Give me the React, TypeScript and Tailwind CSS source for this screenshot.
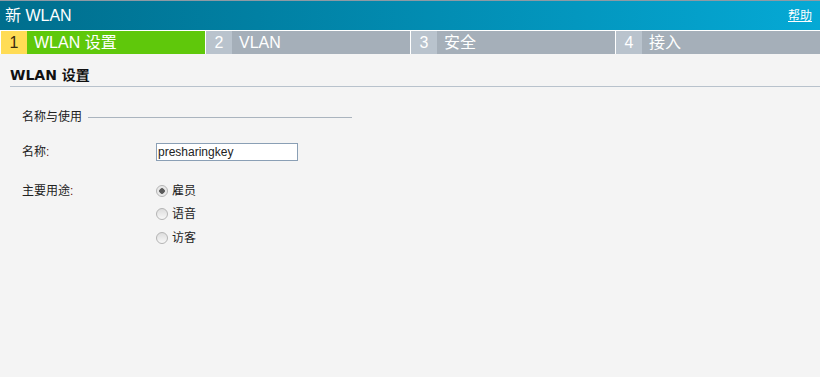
import { useState } from "react";

const steps = [
  { n: "1", label: "WLAN 设置", active: true },
  { n: "2", label: "VLAN", active: false },
  { n: "3", label: "安全", active: false },
  { n: "4", label: "接入", active: false },
];

const uses = ["雇员", "语音", "访客"];

export default function App() {
  const [use, setUse] = useState("雇员");
  const [name, setName] = useState("presharingkey");

  return (
    <div
      className="h-[377px] w-[820px] overflow-hidden bg-[#f4f4f4] text-[12px] text-[#222]"
      style={{ fontFamily: '"Liberation Sans", "Noto Sans CJK SC", sans-serif' }}
    >
      {/* title bar */}
      <div className="h-[1px] bg-[#8e9aa4]" />
      <div className="flex h-[29px] items-center justify-between bg-gradient-to-r from-[#006e8d] to-[#05a9d5] pl-[5px] pr-[8px] text-white">
        <span className="text-[16px]">新 WLAN</span>
        <a href="#" className="text-[12px] underline">帮助</a>
      </div>

      {/* wizard steps */}
      <div className="flex border-t border-white">
        {steps.map((s) => (
          <div key={s.n} className="flex h-[23px] flex-1 border-l border-white text-[16px] text-white">
            <div
              className={
                s.active
                  ? "flex w-[26px] items-center justify-center bg-[#ffdc55] text-[#3a2a10]"
                  : "flex w-[26px] items-center justify-center bg-[#b9c3cd]"
              }
            >
              {s.n}
            </div>
            <div
              className={
                s.active
                  ? "flex flex-1 items-center bg-[#5fc80b] pl-[7px]"
                  : "flex flex-1 items-center bg-[#a5afb9] pl-[7px]"
              }
            >
              {s.label}
            </div>
          </div>
        ))}
      </div>

      {/* page */}
      <div className="pl-[10px] leading-[16px]">
        <h2
          className="mt-[13px] border-b border-[#b8c2cc] pb-[3px] text-[14px] font-bold text-[#111]"
          style={{ fontFamily: '"DejaVu Sans", "Noto Sans CJK SC", sans-serif' }}
        >
          WLAN 设置
        </h2>

        <div className="ml-[12px] mt-[22px] flex w-[330px] items-center">
          <span>名称与使用</span>
          <div className="ml-[6px] h-px flex-1 bg-[#aab4be]" />
        </div>

        <div className="ml-[12px] mt-[18px] flex items-center">
          <label className="w-[134px]">
            名称<span className="text-[#6a1414]">:</span>
          </label>
          <input
            value={name}
            onChange={(e) => setName(e.target.value)}
            className="h-[18px] w-[142px] border border-[#8a9fb5] bg-white px-px text-[12px] text-[#222] outline-none"
          />
        </div>

        <div className="ml-[12px] mt-[21px] flex">
          <span className="flex h-[17px] w-[134px] items-center">
            主要用途<span className="text-[#6a1414]">:</span>
          </span>
          <div className="flex flex-col gap-[6.5px]">
            {uses.map((u) => (
              <label key={u} className="flex h-[17px] items-center gap-[4px]">
                <input
                  type="radio"
                  name="use"
                  checked={use === u}
                  onChange={() => setUse(u)}
                  className="m-0 h-[12px] w-[12px] appearance-none rounded-full border border-[#b4b4b4] bg-[linear-gradient(#dcdcdc,#f8f8f8)] checked:bg-[radial-gradient(circle,#5a5a5a_0,#5a5a5a_2.5px,#e4e4e4_3px,#f4f4f4_100%)]"
                />
                <span>{u}</span>
              </label>
            ))}
          </div>
        </div>
      </div>
    </div>
  );
}
